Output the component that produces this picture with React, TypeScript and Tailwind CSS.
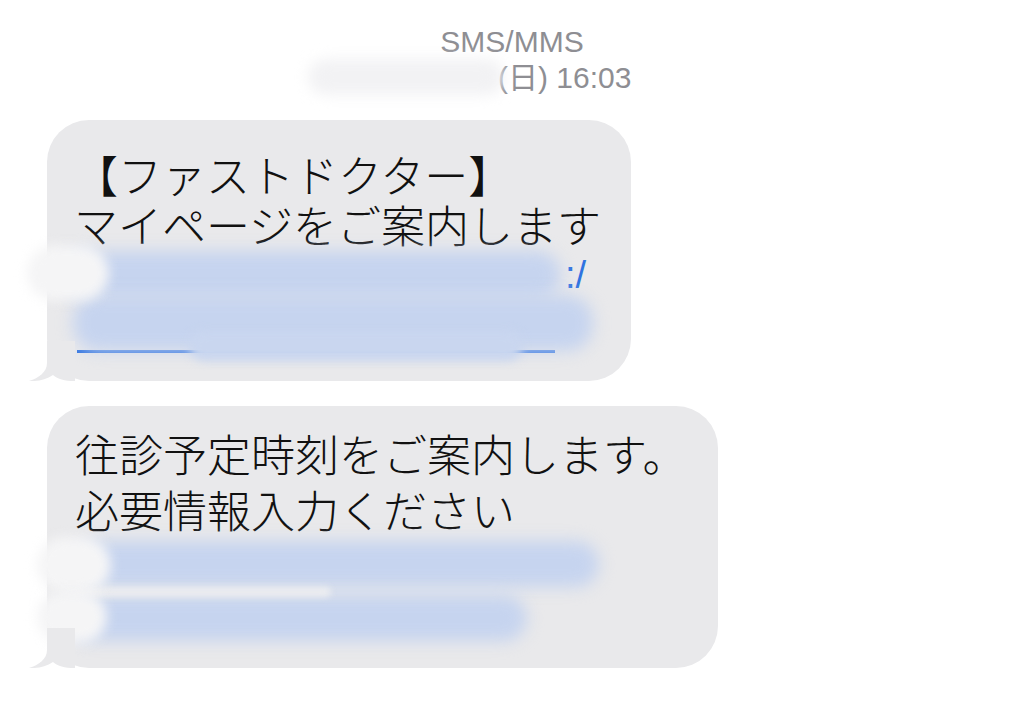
import React from 'react';

const jp = "font-['Noto_Sans_CJK_JP','Noto_Sans',sans-serif] font-light text-[44px] text-[#111]";
const blur = 'rounded-[26px] bg-[#c6d4ef] blur-[8px]';
const smear = 'absolute rounded-full bg-[#f5f5f6] blur-[6px]';

function Tail() {
  return (
    <svg className="absolute left-[-18px] bottom-0" width="46" height="40" viewBox="0 0 46 40">
      <path
        d="M18 0 V22 C18 31 10 37 0 40 C9 40.5 17 38.5 24 34 C29 38 35 40 46 40 V0 Z"
        fill="#e9e9eb"
      />
    </svg>
  );
}

function Bubble({ children, className }: { children: React.ReactNode; className: string }) {
  return (
    <div className="relative self-start">
      <div className={`relative rounded-[42px] bg-[#e9e9eb] pl-[30px] pr-[24px] ${className}`}>
        {children}
      </div>
      <Tail />
    </div>
  );
}

export default function App() {
  return (
    <div className="w-[1024px] h-[702px] overflow-hidden bg-white font-['Liberation_Sans','Noto_Sans_CJK_JP',sans-serif]">
      <header className="pt-[24px] text-[30px] leading-[35px] text-[#8e8e93]">
        <div className="text-center">SMS/MMS</div>
        <div className="flex items-center">
          <div className="ml-[308px] h-[36px] w-[196px] rounded-full bg-[#f2f2f4] blur-[7px]" />
          <span className="-ml-[6px]">(日) 16:03</span>
        </div>
      </header>

      <main className="ml-[47px] mt-[25px] flex flex-col gap-[25px]">
        <Bubble className="w-[584px] pt-[29px] pb-[28px]">
          <p className={`${jp} leading-[50px]`}>
            <span className="-ml-[3px]">【ファストドクター】</span>
            <br />
            <span className="-ml-[3px]">マイページをご案内します</span>
          </p>
          <div className="relative flex flex-col">
            <div className="flex h-[52px] items-center gap-[4px]">
              <div className={`-ml-[14px] h-[48px] w-[498px] ${blur}`} />
              <span className="text-[38px] leading-[38px] text-[#2f73e0]">:/</span>
            </div>
            <div className="relative h-[52px] w-[478px] border-b-[3px] border-[#2f73e0]">
              <div className={`absolute -left-[4px] top-[-6px] h-[56px] w-[520px] ${blur}`} />
              <div className="absolute left-[112px] top-[30px] h-[30px] w-[334px] rounded-[16px] bg-[#c9d6ef] blur-[5px]" />
            </div>
            <div className={`${smear} left-[-50px] top-[-4px] h-[56px] w-[82px]`} />
          </div>
        </Bubble>

        <Bubble className="w-[671px] pt-[19px] pb-[27px]">
          <p className={`${jp} leading-[56px]`}>
            <span className="-ml-[2px]">往診予定時刻をご案内します。</span>
            <br />
            <span className="-ml-[2px]">必要情報入力ください</span>
          </p>
          <div className="relative flex flex-col gap-[8px] pt-[4px]">
            <div className={`ml-[-2px] h-[46px] w-[524px] ${blur}`} />
            <div className={`ml-[-12px] h-[46px] w-[462px] ${blur}`} />
            <div className="absolute left-[-16px] top-[50px] h-[10px] w-[270px] rounded-full bg-[#ecedf0] blur-[3px]" />
            <div className={`${smear} left-[-40px] top-[0px] h-[56px] w-[74px]`} />
            <div className={`${smear} left-[-40px] top-[54px] h-[52px] w-[70px]`} />
          </div>
        </Bubble>
      </main>
    </div>
  );
}
